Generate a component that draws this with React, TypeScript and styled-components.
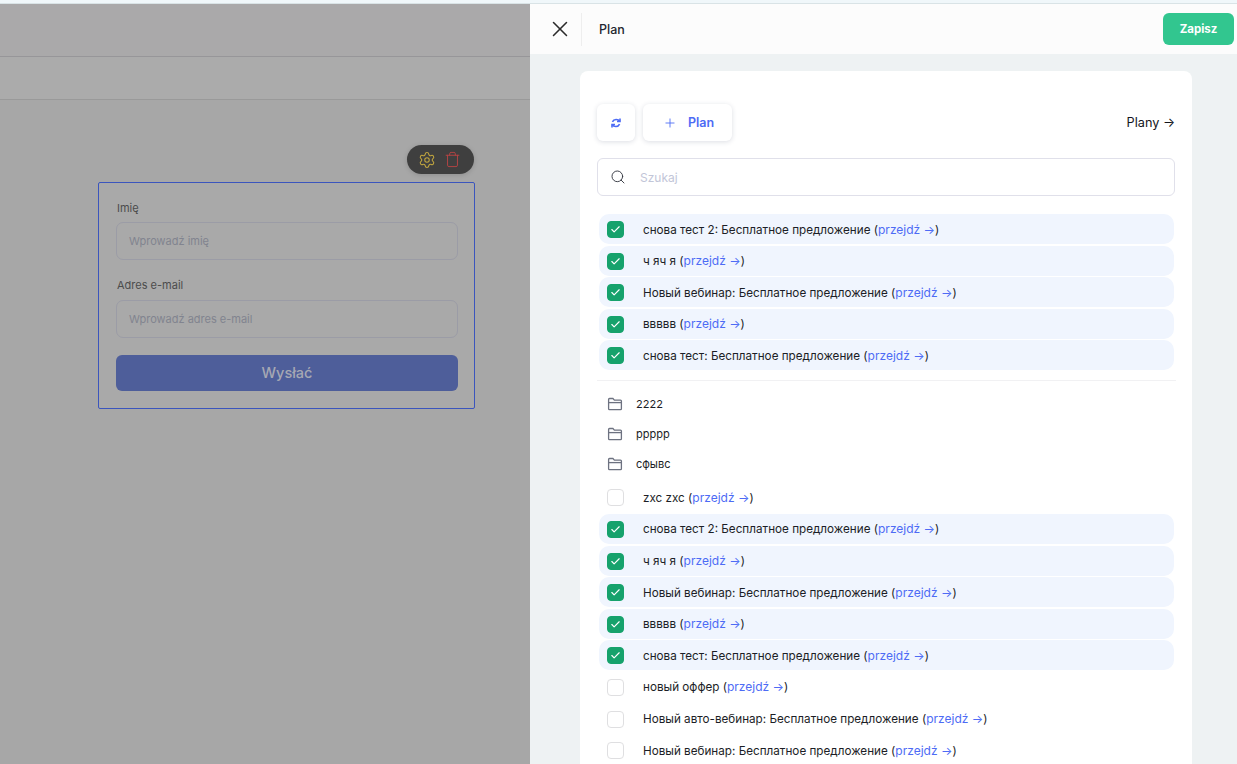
import React from "react";
import styled, { createGlobalStyle } from "styled-components";
import { Check, Plus, Search, Settings, Trash, X } from "lucide-react";

const GlobalStyle = createGlobalStyle`
  html, body {
    margin: 0;
    padding: 0;
    height: 100%;
    overflow: hidden;
    font-family: Inter, "Noto Sans", sans-serif;
    background: #f0f7fa;
  }
  * { box-sizing: border-box; }
`;

const Page = styled.div`
  display: flex;
  flex-direction: column;
  width: 1237px;
  height: 764px;
  overflow: hidden;
`;

const Strip = styled.div`
  height: 4px;
  flex-shrink: 0;
  border-bottom: 1px solid #d9e3e6;
`;

const Main = styled.div`
  flex: 1;
  display: flex;
  min-height: 0;
`;

const Backdrop = styled.div`
  width: 530px;
  flex-shrink: 0;
  background: #a7a7a7;
  display: flex;
  flex-direction: column;
`;

const TopBar = styled.div<{ $height: number; $tone: string; $line: string }>`
  height: ${(p) => p.$height}px;
  background: ${(p) => p.$tone};
  border-bottom: 1px solid ${(p) => p.$line};
`;

const Canvas = styled.div`
  display: flex;
  flex-direction: column;
  align-items: flex-end;
  width: 475px;
  padding-top: 45px;
`;

const Toolbar = styled.div`
  width: 67px;
  height: 29px;
  margin-right: 1px;
  margin-bottom: 8px;
  border-radius: 15px;
  background: #3f3f3f;
  box-shadow: 0 1px 5px rgba(0, 0, 0, 0.15);
  display: flex;
  align-items: center;
  gap: 8px;
  padding-left: 11px;
`;

const FormBlock = styled.div`
  width: 377px;
  height: 227px;
  padding: 17px 16px 0 17px;
  background: #a9a9a9;
  border: 1px solid #3b55bd;
  border-radius: 2px;
  display: flex;
  flex-direction: column;
`;

const FieldLabel = styled.div<{ $gap: number }>`
  font-size: 11px;
  line-height: 17px;
  color: #4c4c4c;
  margin-left: 1px;
  margin-bottom: ${(p) => p.$gap}px;
`;

const FieldBox = styled.div`
  height: 38px;
  border: 1px solid #9b9ca6;
  border-radius: 7px;
  padding-left: 12px;
  display: flex;
  align-items: center;
  font-size: 11px;
  color: #81848f;
  margin-bottom: 17px;
`;

const SubmitBar = styled.div`
  height: 36px;
  padding-bottom: 1px;
  border-radius: 6px;
  background: #4e5e9a;
  color: #a6a8b3;
  font-size: 14.5px;
  font-weight: 500;
  display: flex;
  align-items: center;
  justify-content: center;
`;

const Drawer = styled.div`
  flex: 1;
  display: flex;
  flex-direction: column;
  background: #eef2f3;
  min-width: 0;
`;

const DrawerHeader = styled.div`
  height: 50px;
  flex-shrink: 0;
  background: #fcfcfc;
  display: flex;
  align-items: center;
  padding-right: 3px;
`;

const CloseButton = styled.div`
  width: 52px;
  height: 33px;
  padding-left: 9px;
  border-right: 1px solid #eeeeee;
  display: flex;
  align-items: center;
  justify-content: center;
  color: #2b2b2b;
`;

const HeaderTitle = styled.div`
  flex: 1;
  margin-left: 17px;
  font-size: 12.5px;
  font-weight: 500;
  color: #23262f;
`;

const SaveButton = styled.div`
  width: 71px;
  height: 32px;
  border-radius: 6px;
  background: #32c68f;
  color: #ffffff;
  font-size: 11.5px;
  font-weight: 700;
  display: flex;
  align-items: center;
  justify-content: center;
`;

const Card = styled.div`
  width: 612px;
  margin: 17px 0 0 50px;
  padding: 33px 17px 0;
  background: #ffffff;
  border-radius: 8px 8px 0 0;
  flex: 1;
`;

const ActionRow = styled.div`
  display: flex;
  align-items: center;
  gap: 8px;
  height: 37px;
`;

const ActionButton = styled.div<{ $wide?: boolean }>`
  width: ${(p) => (p.$wide ? "89px" : "38px")};
  height: 37px;
  padding-left: ${(p) => (p.$wide ? "2px" : "0")};
  border-radius: 6px;
  background: #ffffff;
  box-shadow: 0 1px 5px rgba(40, 50, 90, 0.16);
  color: #4d6bf5;
  font-size: 12.5px;
  font-weight: 600;
  display: flex;
  align-items: center;
  justify-content: center;
  gap: 11px;
`;

const PlansLink = styled.div`
  margin-left: auto;
  font-size: 12.7px;
  color: #14161d;
`;

const SearchBox = styled.div`
  height: 38px;
  margin-top: 17px;
  border: 1px solid #e0e0ea;
  border-radius: 6px;
  display: flex;
  align-items: center;
  padding-left: 12px;
  gap: 14px;
  font-size: 12px;
  color: #c2c6d8;
`;

const List = styled.div<{ $top: number }>`
  margin-top: ${(p) => p.$top}px;
  margin-left: 2px;
  margin-right: 1px;
  display: flex;
  flex-direction: column;
  gap: 1.6px;
`;

const Row = styled.div<{ $on: boolean }>`
  height: 30px;
  flex-shrink: 0;
  border-radius: 10px;
  background: ${(p) => (p.$on ? "#f0f5fe" : "transparent")};
  display: flex;
  align-items: center;
  padding-left: 8px;
  font-size: 11.7px;
  color: #1c1e26;
`;

const Tick = styled.div<{ $on: boolean }>`
  width: 17px;
  height: 17px;
  margin-top: 1px;
  margin-right: 19px;
  flex-shrink: 0;
  border-radius: 4px;
  color: #ffffff;
  background: ${(p) => (p.$on ? "#16a26c" : "#ffffff")};
  border: 1px solid ${(p) => (p.$on ? "#16a26c" : "#dfdfe1")};
  display: flex;
  align-items: center;
  justify-content: center;
`;

const GoLink = styled.span`
  color: #4d6bf5;
  font-size: 12px;
`;

const Divider = styled.div`
  height: 1px;
  margin-top: 10px;
  margin-right: -1px;
  background: #f1f1f3;
`;

const FolderList = styled.div`
  margin-top: 8px;
  display: flex;
  flex-direction: column;
`;

const FolderRow = styled.div`
  height: 30px;
  padding-left: 10px;
  display: flex;
  align-items: center;
  gap: 13px;
  font-size: 11px;
  color: #1c1e26;
`;

const FolderIcon = () => (
  <svg width="16" height="16" viewBox="0 0 16 16" fill="none" stroke="#6d7280" strokeWidth="1.3">
    <path d="M1.6 3.4c0-.5.4-.9.9-.9h3.4l1.5 1.7h6.1c.5 0 .9.4.9.9v7.6c0 .5-.4.9-.9.9H2.5c-.5 0-.9-.4-.9-.9V3.4z" />
    <path d="M1.6 6.6h12.8" />
  </svg>
);

const SyncIcon = () => (
  <svg width="12" height="12" viewBox="0 0 12 12" fill="none" stroke="#4d6bf5" strokeWidth="1.6">
    <path d="M10 1.5v3H7" />
    <path d="M2 10.5v-3h3" />
    <path d="M9.8 4.5A4.2 4.2 0 0 0 2.4 4.8" />
    <path d="M2.2 7.5A4.2 4.2 0 0 0 9.6 7.2" />
  </svg>
);

type Item = { name: string; on: boolean };

const selected: Item[] = [
  { name: "снова тест 2: Бесплатное предложение", on: true },
  { name: "ч яч я", on: true },
  { name: "Новый вебинар: Бесплатное предложение", on: true },
  { name: "ввввв", on: true },
  { name: "снова тест: Бесплатное предложение", on: true },
];

const rest: Item[] = [
  { name: "zxc zxc", on: false },
  ...selected,
  { name: "новый оффер", on: false },
  { name: "Новый авто-вебинар: Бесплатное предложение", on: false },
  { name: "Новый вебинар: Бесплатное предложение", on: false },
];

const OfferRow = ({ name, on }: Item) => (
  <Row $on={on}>
    <Tick $on={on}>{on ? <Check size={11} strokeWidth={2.5} /> : null}</Tick>
    <span>
      {name} (<GoLink>przejdź →</GoLink>)
    </span>
  </Row>
);

export default function App() {
  return (
    <>
      <GlobalStyle />
      <Page>
        <Strip />
        <Main>
          <Backdrop>
            <TopBar $height={53} $tone="#aaa9aa" $line="#979699" />
            <TopBar $height={43} $tone="#ababab" $line="#999999" />
            <Canvas>
              <Toolbar>
                <Settings size={18} strokeWidth={1.4} color="#c2a63f" />
                <Trash size={17} strokeWidth={1.3} color="#b94444" />
              </Toolbar>
              <FormBlock>
                <FieldLabel $gap={5}>Imię</FieldLabel>
                <FieldBox>Wprowadź imię</FieldBox>
                <FieldLabel $gap={6}>Adres e-mail</FieldLabel>
                <FieldBox>Wprowadź adres e-mail</FieldBox>
                <SubmitBar>Wysłać</SubmitBar>
              </FormBlock>
            </Canvas>
          </Backdrop>
          <Drawer>
            <DrawerHeader>
              <CloseButton>
                <X size={26} strokeWidth={1.4} />
              </CloseButton>
              <HeaderTitle>Plan</HeaderTitle>
              <SaveButton>Zapisz</SaveButton>
            </DrawerHeader>
            <Card>
              <ActionRow>
                <ActionButton>
                  <SyncIcon />
                </ActionButton>
                <ActionButton $wide>
                  <Plus size={14} strokeWidth={1.5} />
                  Plan
                </ActionButton>
                <PlansLink>Plany →</PlansLink>
              </ActionRow>
              <SearchBox>
                <Search size={16} strokeWidth={1.4} color="#33363f" />
                Szukaj
              </SearchBox>
              <List $top={18}>
                {selected.map((item) => (
                  <OfferRow key={item.name} {...item} />
                ))}
              </List>
              <Divider />
              <FolderList>
                {["2222", "ppppp", "сфывс"].map((name) => (
                  <FolderRow key={name}>
                    <FolderIcon />
                    {name}
                  </FolderRow>
                ))}
              </FolderList>
              <List $top={3}>
                {rest.map((item, i) => (
                  <OfferRow key={i} {...item} />
                ))}
              </List>
            </Card>
          </Drawer>
        </Main>
      </Page>
    </>
  );
}
